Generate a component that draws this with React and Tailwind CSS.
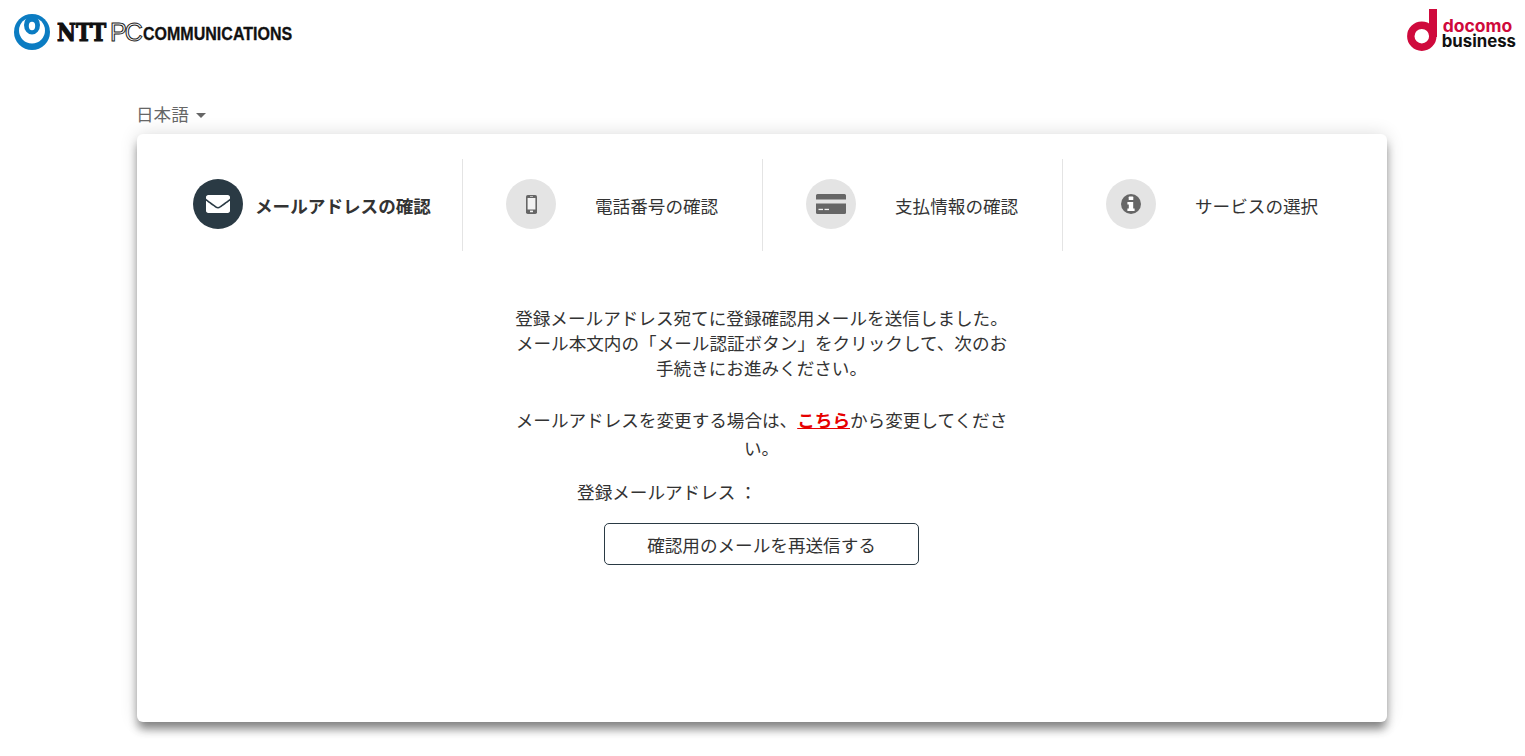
import React from 'react';
import { FaEnvelope } from 'react-icons/fa';

const MobileIcon = () => (
  <svg width="11" height="19" viewBox="0 0 11 19">
    <rect width="11" height="19" rx="1.8" fill="#666" />
    <rect x="1.6" y="3" width="7.8" height="11.5" fill="#f2f2f2" />
    <rect x="4" y="15.6" width="3" height="1.6" fill="#f2f2f2" />
    <rect x="4" y="1.2" width="3" height="0.8" fill="#cfcfcf" />
  </svg>
);

const CardIcon = () => (
  <svg width="30" height="20" viewBox="0 0 30 20">
    <path d="M1.5 0 H28.5 A1.5 1.5 0 0 1 30 1.5 V5.5 H0 V1.5 A1.5 1.5 0 0 1 1.5 0 Z" fill="#666" />
    <path d="M0 9.5 H30 V18.5 A1.5 1.5 0 0 1 28.5 20 H1.5 A1.5 1.5 0 0 1 0 18.5 Z" fill="#666" />
    <rect x="2.5" y="14.8" width="4.5" height="1.3" fill="#f2f2f2" />
    <rect x="8.5" y="14.8" width="4.5" height="1.3" fill="#f2f2f2" />
  </svg>
);

const InfoIcon = () => (
  <svg width="20" height="20" viewBox="0 0 20 20">
    <circle cx="10" cy="10" r="10" fill="#666" />
    <rect x="7.7" y="2.6" width="4.6" height="3.4" rx="0.6" fill="#fff" />
    <path d="M6.4 8 H12.2 V14.4 H13.6 V17 H6.4 V14.4 H7.8 V10.4 H6.4 Z" fill="#fff" />
  </svg>
);

const steps = [
  { label: '電話番号の確認', icon: <MobileIcon /> },
  { label: '支払情報の確認', icon: <CardIcon /> },
  { label: 'サービスの選択', icon: <InfoIcon /> },
];

function NttLogo() {
  return (
    <div className="flex items-center h-[36px]">
      <svg width="36" height="36" viewBox="0 0 36 36" className="shrink-0">
        {/* ring, crescent cut-out, and the oval hanging from the top */}
        <circle cx="18" cy="18" r="18" fill="#0b7cc2" />
        <circle cx="18" cy="16.5" r="13" fill="#ffffff" />
        <ellipse cx="18" cy="11" rx="8" ry="9.5" fill="#0b7cc2" />
        <ellipse cx="18" cy="12" rx="3.2" ry="4.2" fill="#ffffff" />
      </svg>
      <span className="ml-[7px] inline-block w-[48px] origin-left scale-x-[0.83] font-['DejaVu_Serif'] font-bold text-[25px] leading-none text-[#111] whitespace-nowrap [-webkit-text-stroke:1.2px_#111]">NTT</span>
      <span className="ml-[5px] font-['Liberation_Sans'] text-[25px] leading-none text-transparent [-webkit-text-stroke:1px_#222] tracking-[-2px]">PC</span>
      <span className="ml-[2px] mt-[4px] inline-block w-[149px] origin-left scale-x-[0.89] font-['Liberation_Sans'] font-bold text-[18px] leading-none text-[#111] whitespace-nowrap [-webkit-text-stroke:0.3px_#111]">COMMUNICATIONS</span>
    </div>
  );
}

function DocomoLogo() {
  return (
    <div className="flex items-start h-[42px]">
      <svg width="30" height="42" viewBox="0 0 30 42" className="shrink-0">
        <circle cx="14.8" cy="27.2" r="11" fill="none" stroke="#cf0a3c" strokeWidth="7.4" />
        <rect x="22" y="0" width="8" height="28" fill="#cf0a3c" />
      </svg>
      <div className="ml-[5px] mt-[9px] flex flex-col font-['Inter'] font-bold leading-[15px]">
        <span className="ml-[1px] text-[#cf0a3c] text-[17.5px]">docomo</span>
        <span className="mt-[1px] text-[#111] text-[16.8px]">business</span>
      </div>
    </div>
  );
}

export default function App() {
  return (
    <div className="min-h-screen bg-white text-[#333] text-[17.6px] font-['Noto_Sans_CJK_JP','Noto_Sans',sans-serif]">
      <header className="flex items-start justify-between pl-[14px] pr-[9px] pt-[9px] h-[96px]">
        <div className="pt-[5px]"><NttLogo /></div>
        <DocomoLogo />
      </header>

      <div className="w-[1250px] ml-[137px]">
        <div className="h-[38px] flex items-start">
          <button className="-ml-[1px] flex items-center text-[#666] leading-[20px] mt-[8px]">
            日本語
            <span className="ml-[7px] mt-[3px] border-x-[5px] border-x-transparent border-t-[5px] border-t-[#666]"></span>
          </button>
        </div>

        <main className="h-[588px] bg-white rounded-[6px] shadow-[0_8px_10px_-1px_rgba(0,0,0,0.45),0_0_18px_rgba(0,0,0,0.14)] pt-[25px] pl-[26px] pr-[24px]">
          <div className="flex h-[92px]">
            <div className="w-[300px] flex items-start pt-[20px] pl-[30px] border-r border-[#e4e4e4]">
              <span className="w-[50px] h-[50px] rounded-full bg-[#2a3a44] text-white flex items-center justify-center shrink-0">
                <FaEnvelope size={24} />
              </span>
              <span className="ml-[12px] mt-[14px] font-bold leading-[25px] whitespace-nowrap">メールアドレスの確認</span>
            </div>
            {steps.map((s, i) => (
              <div key={s.label} className={`w-[300px] flex items-start pt-[20px] pl-[43px] ${i < 2 ? 'border-r border-[#e4e4e4]' : ''}`}>
                <span className="w-[50px] h-[50px] rounded-full bg-[#e4e4e4] flex items-center justify-center shrink-0">
                  {s.icon}
                </span>
                <span className="ml-[39px] mt-[14px] leading-[25px] whitespace-nowrap">{s.label}</span>
              </div>
            ))}
          </div>

          <div className="w-[1197px]">
            <div className="w-[500px] mx-auto mt-[54px] text-center leading-[25px]">
              <p>
                登録メールアドレス宛てに登録確認用メールを送信しました。<br />
                メール本文内の「メール認証ボタン」をクリックして、次のお<br />
                手続きにお進みください。
              </p>
              <p className="mt-[26px] leading-[28px]">
                メールアドレスを変更する場合は、<a href="#" className="font-bold text-[#e60000] underline">こちら</a>から変更してくださ<br />
                い。
              </p>
              <p className="mt-[17px] flex justify-center">
                <span>登録メールアドレス ：</span>
                <span className="inline-block w-[189px]"></span>
              </p>
              <button className="mt-[19px] w-[315px] h-[42px] rounded-[5px] border border-[#2a3a44] bg-white text-[#333]">
                確認用のメールを再送信する
              </button>
            </div>
          </div>
        </main>
      </div>
    </div>
  );
}
